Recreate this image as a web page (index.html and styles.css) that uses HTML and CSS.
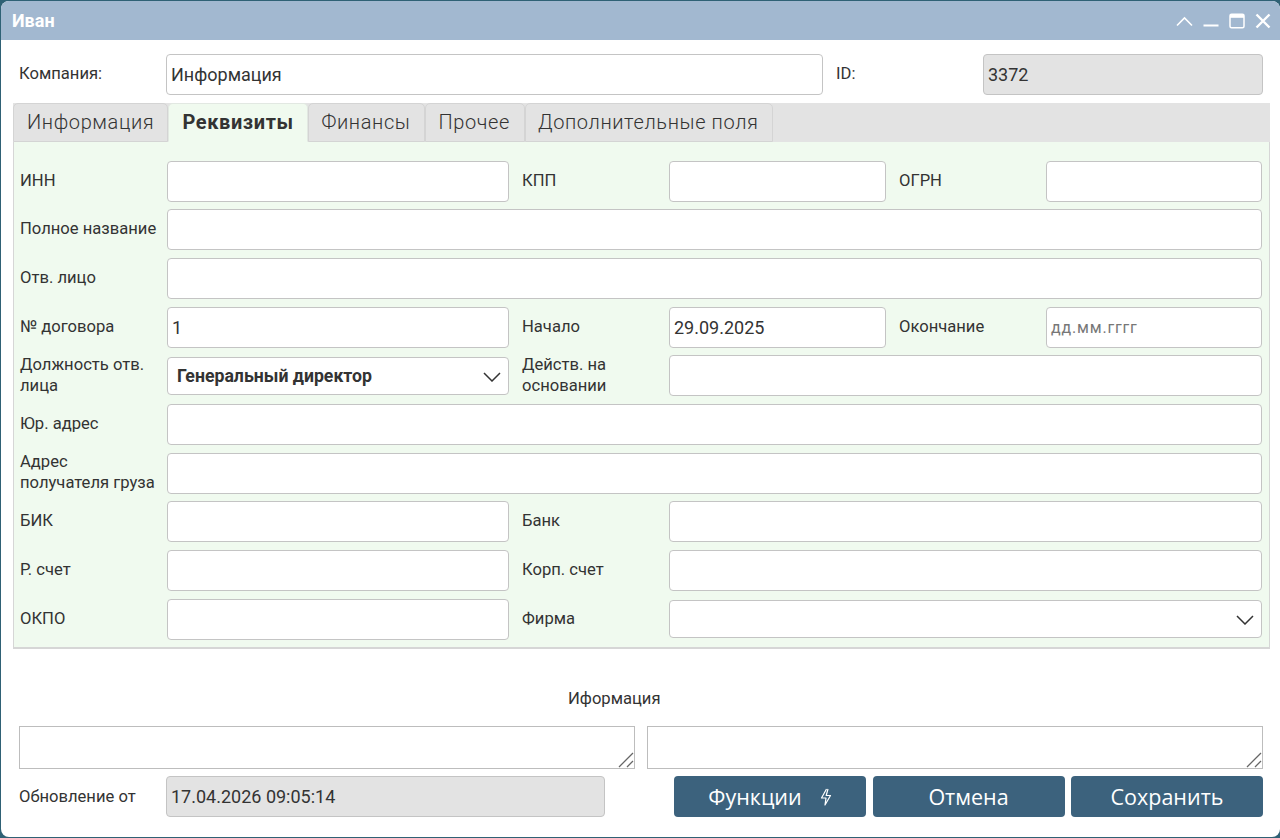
FILE: index.html
```html
<!DOCTYPE html>
<html lang="ru">
<head>
<meta charset="utf-8">
<title>Иван</title>
<link rel="stylesheet" href="styles.css">
</head>
<body>
<div class="window">
  <header class="titlebar">
    <span class="title">Иван</span>
    <div class="win-icons">
      <svg class="ico" width="17" height="12" viewBox="0 0 17 12"><path d="M1 10.5 L8.5 3 L16 10.5" fill="none" stroke="#fff" stroke-width="1.6"/></svg>
      <svg class="ico" width="16" height="12" viewBox="0 0 16 12"><path d="M0.5 10.5 H15.5" fill="none" stroke="#fff" stroke-width="2"/></svg>
      <svg class="ico" width="16" height="16" viewBox="0 0 16 16"><rect x="1" y="1.2" width="14" height="13.6" rx="1.5" fill="none" stroke="#fff" stroke-width="1.5"/><rect x="1" y="1.2" width="14" height="3.6" fill="#fff"/></svg>
      <svg class="ico" width="16" height="16" viewBox="0 0 16 16"><path d="M1.5 1.5 L14.5 14.5 M14.5 1.5 L1.5 14.5" fill="none" stroke="#fff" stroke-width="2.4"/></svg>
    </div>
  </header>

  <div class="company-row">
    <label class="lbl company-lbl">Компания:</label>
    <div class="field company-field">Информация</div>
    <label class="lbl id-lbl">ID:</label>
    <div class="field disabled id-field">3372</div>
  </div>

  <nav class="tabs">
    <span class="tab tab1">Информация</span>
    <span class="tab active">Реквизиты</span>
    <span class="tab">Финансы</span>
    <span class="tab">Прочее</span>
    <span class="tab">Дополнительные поля</span>
  </nav>

  <section class="panel">
    <div class="lbl">ИНН</div><div class="field"></div>
    <div class="lbl mid">КПП</div><div class="field"></div>
    <div class="lbl mid">ОГРН</div><div class="field"></div>

    <div class="lbl">Полное название</div><div class="field span5"></div>
    <div class="lbl">Отв. лицо</div><div class="field span5"></div>

    <div class="lbl">№ договора</div><div class="field">1</div>
    <div class="lbl mid">Начало</div><div class="field">29.09.2025</div>
    <div class="lbl mid">Окончание</div><div class="field placeholder">дд.мм.гггг</div>

    <div class="lbl">Должность отв. лица</div>
    <div class="field select bold">Генеральный директор
      <svg class="chev" width="18" height="10" viewBox="0 0 18 10"><path d="M1 1 L9 9 L17 1" fill="none" stroke="#333" stroke-width="1.5"/></svg>
    </div>
    <div class="lbl mid">Действ. на основании</div><div class="field span3"></div>

    <div class="lbl">Юр. адрес</div><div class="field span5"></div>
    <div class="lbl">Адрес получателя груза</div><div class="field span5"></div>

    <div class="lbl">БИК</div><div class="field"></div>
    <div class="lbl mid">Банк</div><div class="field span3"></div>

    <div class="lbl">Р. счет</div><div class="field"></div>
    <div class="lbl mid">Корп. счет</div><div class="field span3"></div>

    <div class="lbl">ОКПО</div><div class="field"></div>
    <div class="lbl mid">Фирма</div>
    <div class="field select span3">
      <svg class="chev" width="18" height="10" viewBox="0 0 18 10"><path d="M1 1 L9 9 L17 1" fill="none" stroke="#333" stroke-width="1.5"/></svg>
    </div>
  </section>

  <div class="info-heading">Иформация</div>

  <div class="notes">
    <div class="note"><svg class="grip" width="16" height="16" viewBox="0 0 16 16"><path d="M1 15 L15 1 M9 15 L15 9" fill="none" stroke="#666" stroke-width="1.3"/></svg></div>
    <div class="note"><svg class="grip" width="16" height="16" viewBox="0 0 16 16"><path d="M1 15 L15 1 M9 15 L15 9" fill="none" stroke="#666" stroke-width="1.3"/></svg></div>
  </div>

  <footer class="bottom">
    <label class="lbl update-lbl">Обновление от</label>
    <div class="field disabled update-field">17.04.2026 09:05:14</div>
    <div class="buttons">
      <button class="btn">Функции<svg class="bolt" width="12" height="18" viewBox="0 0 12 18"><path d="M6.5 1 L1.5 10 H6 L5 17 L10.5 7.5 H6.2 L8 1" fill="none" stroke="#fff" stroke-width="1.2" stroke-linejoin="round"/></svg></button>
      <button class="btn">Отмена</button>
      <button class="btn">Сохранить</button>
    </div>
  </footer>
</div>
</body>
</html>
```
FILE: styles.css
```css
* { box-sizing: border-box; }
html, body { margin: 0; height: 100%; }
body {
  background: #2f6175;
  font-family: Roboto, "Liberation Sans", sans-serif;
  color: #333;
  overflow: hidden;
  padding: 1px 0 1px 1px;
}
.window {
  height: 836px;
  background: #fff;
  border-radius: 8px;
  overflow: hidden;
}
.titlebar {
  height: 39px;
  background: #a2b8d0;
  display: flex;
  align-items: center;
  justify-content: space-between;
  padding: 0 9px 0 11px;
}
.title {
  color: #fff;
  font-weight: 700;
  font-size: 18px;
}
.win-icons { display: flex; align-items: center; gap: 10px; }
.ico { display: block; }

.company-row {
  display: flex;
  align-items: center;
  height: 41px;
  margin-top: 14px;
  padding-left: 18px;
}
.lbl {
  font-size: 16.6px;
  line-height: 21px;
  color: #333;
}
.company-lbl { width: 147px; flex: none; position: relative; top: -1px; }
.company-field { width: 657px; flex: none; }
.id-lbl { margin-left: 13px; width: 147px; flex: none; position: relative; top: -1px; }
.id-field { width: 280px; flex: none; }

.field {
  height: 41px;
  background: #fff;
  border: 1px solid #c4c4c4;
  border-radius: 4px;
  padding: 0 4px;
  font-size: 18px;
  line-height: 40px;
  color: #333;
  min-width: 0;
}
.disabled { background: #e3e3e3; }
.placeholder { color: #777; font-size: 16px; letter-spacing: 0.8px; }

.tabs {
  display: flex;
  height: 39px;
  margin: 8px 10px 0 12px;
  background: #e3e3e3;
}
.tab {
  display: block;
  height: 39px;
  padding: 0 13.5px 0 12.5px;
  font-size: 20px;
  font-weight: 300;
  line-height: 37px;
  letter-spacing: 0.62px;
  color: #333;
  background: #e3e3e3;
  border: 1px solid #d4d4d4;
  border-radius: 5px 5px 0 0;
}
.tab.tab1 { width: 155px; padding-left: 13px; }
.tab.active {
  width: 140px;
  background: #f0faef;
  font-weight: 700;
  letter-spacing: 0.6px;
  border-color: #e2e8e2;
  border-bottom-color: #f0faef;
  text-align: center;
  padding: 0;
}

.panel {
  margin: 0 10px 0 12px;
  height: 507px;
  background: #f0faef;
  border: 1px solid #d6d6d6;
  border-bottom-width: 2px;
  border-top: 0;
  padding: 19px 7px 0 6px;
  display: grid;
  grid-template-columns: 147px 342px 160px 217px 160px 216px;
  grid-auto-rows: 40.67px;
  row-gap: 8px;
  align-items: center;
}
.panel > .lbl { padding-right: 8px; position: relative; top: -1px; }
.panel > .lbl.mid { padding-left: 13px; }
.span3 { grid-column: span 3; }
.span5 { grid-column: span 5; }
.select {
  position: relative;
  height: 38px;
  line-height: 36px;
  padding-left: 9px;
}
.bold { font-weight: 700; font-size: 17.7px; }
.chev { position: absolute; right: 7px; top: 14px; }

.info-heading {
  margin-top: 38px;
  padding-left: 567px;
  font-size: 16.6px;
  line-height: 24px;
}
.notes {
  display: flex;
  gap: 12px;
  margin-top: 15px;
  padding-left: 18px;
}
.note {
  position: relative;
  height: 43px;
  width: 616px;
  flex: none;
  background: #fff;
  border: 1px solid #bdbdbd;
}
.grip { position: absolute; right: 0; bottom: 0; }

.bottom {
  display: flex;
  align-items: center;
  margin-top: 7px;
  padding-left: 18px;
}
.update-lbl { width: 147px; flex: none; }
.update-field { width: 439px; flex: none; }
.buttons { display: flex; gap: 6.5px; margin-left: 69px; }
.btn {
  width: 192px;
  height: 41px;
  border: 0;
  border-radius: 4px;
  background: #3c627d;
  color: #fff;
  font-family: "Open Sans", sans-serif;
  font-size: 21.5px;
  font-weight: 500;
  display: flex;
  align-items: center;
  justify-content: center;
  gap: 18px;
  padding: 0;
}
.bolt { display: block; }
```
